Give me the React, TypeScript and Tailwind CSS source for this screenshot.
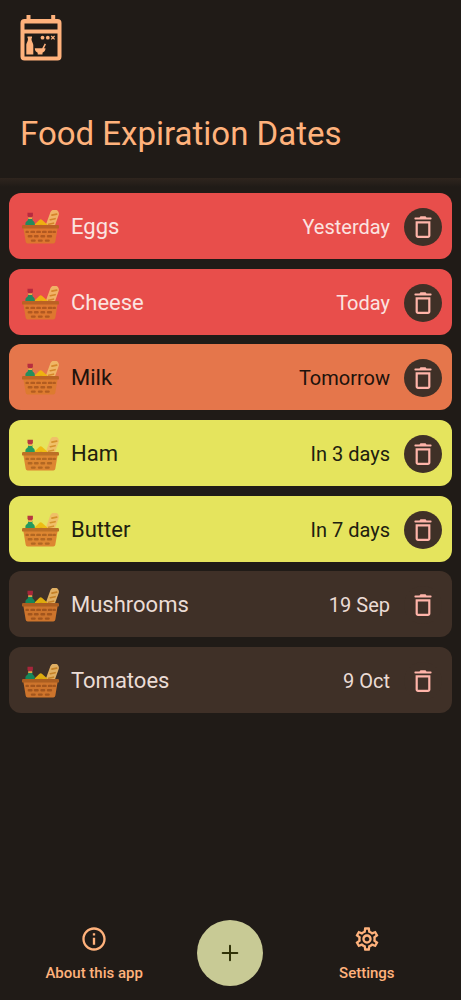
import { MdInfoOutline, MdOutlineSettings } from "react-icons/md";
import clsx from "clsx";

type Tone = "expired" | "soon" | "upcoming" | "later";

type FoodItem = {
  name: string;
  date: string;
  tone: Tone;
};

const items: FoodItem[] = [
  { name: "Eggs", date: "Yesterday", tone: "expired" },
  { name: "Cheese", date: "Today", tone: "expired" },
  { name: "Milk", date: "Tomorrow", tone: "soon" },
  { name: "Ham", date: "In 3 days", tone: "upcoming" },
  { name: "Butter", date: "In 7 days", tone: "upcoming" },
  { name: "Mushrooms", date: "19 Sep", tone: "later" },
  { name: "Tomatoes", date: "9 Oct", tone: "later" },
];

const toneClasses: Record<Tone, string> = {
  expired: "bg-[#e84e4b] text-[#fbe3e0]",
  soon: "bg-[#e5764b] text-[#20120c]",
  upcoming: "bg-[#e5e45d] text-[#20200f]",
  later: "bg-[#3f3027] text-[#ebdcd5]",
};

function AppLogo() {
  return (
    <svg width="42" height="46" viewBox="0 0 42 46" aria-hidden="true">
      <g fill="#ffb27c">
        <path d="M6.500 0h4v6h-4zM31.200 0h4v6h-4z" />
        <path
          fillRule="evenodd"
          d="M4.500 4h33a4 4 0 0 1 4 4v33.500a4 4 0 0 1-4 4h-33a4 4 0 0 1-4-4V8a4 4 0 0 1 4-4zM4.500 8.500v6h33v-6zM4.500 18.500v23h33v-23z"
        />
        <path d="M7.500 21.500h4.500v1.500l-.5.500c0 3.500 1.800 4 1.800 7V39.500H6.300V30.500c0-3 1.700-3.500 1.700-7l-.5-.5z" />
        <path d="M14.800 33.300h7.400l2.500-4.800 1.300.7-2 4.100h1.500c0 2.500-1.500 3.800-3 4.400v1.800h-4.800v-1.800C16.200 37.100 14.800 35.800 14.800 33.300z" />
        <circle cx="22.500" cy="22.700" r="1.900" />
        <circle cx="27.800" cy="22.700" r="1.900" />
      </g>
      <path d="M31.200 21l3.400 3.400M34.600 21l-3.400 3.400" stroke="#ffb27c" strokeWidth="1.200" />
    </svg>
  );
}

function Basket() {
  return (
    <svg className="shrink-0 opacity-90" width="37" height="34" viewBox="0 0 37 34" aria-hidden="true">
      <g transform="rotate(20 31 8)">
        <rect x="26.600" y="-.8" width="8.800" height="21" rx="4.400" fill="#f2bd6a" />
        <path
          d="M29 5.700l4.200-2.600M29 10.500l4.200-2.600M29 15.300l4.200-2.600"
          stroke="#d48a26"
          strokeWidth="1.600"
          strokeLinecap="round"
        />
      </g>
      <path d="M11 16l6.500-6.300q1.200-1 2.400 0L27 16z" fill="#f0b90b" />
      <path d="M15 16q4-3 8 0z" fill="#dba408" />
      <path d="M6 8h4.400v1.500c0 1.800 2.400 1.500 2.400 4.500v3H3.400v-3c0-3 2.600-2.700 2.600-4.500z" fill="#119160" />
      <path d="M6.200 6.500h4V9h-4z" fill="#f0b04c" />
      <path d="M5.500 2.700h5.400v2.600l-.6 1.900H6.100l-.6-1.900z" fill="#b3263e" />
      <path d="M1.200 17h34.600l-2.500 14.700a2 2 0 0 1-2 1.700H5.700a2 2 0 0 1-2-1.700z" fill="#dd7c2d" />
      <rect x="0" y="15" width="37" height="3.600" rx="1.200" fill="#b86420" />
      <path
        d="M4.600 21.900h1.200M9.500 21.900h2.500M15.300 21.900h2.500M21.100 21.900h2.500M27 21.900h2.500M32 21.900h.8M6.800 26.300h2.600M13 26.300h2.600M19.500 26.300h2.600M26 26.300h3M10 30.600h2.600M17 30.600h2.600M24 30.600h2.600"
        stroke="#ad5a1c"
        strokeWidth="2.400"
        strokeLinecap="round"
      />
    </svg>
  );
}

function TrashIcon() {
  return (
    <svg width="28" height="28" viewBox="0 0 28 28" fill="none" aria-hidden="true">
      <path d="M11.500 3.300h5l1 1.300h4.300q.8 0 .8 1t-.8 1H6.200q-.8 0-.8-1t.8-1h4.300z" fill="currentColor" />
      <path
        d="M7.700 9.300h12.600v13.300a1.300 1.300 0 0 1-1.300 1.300H9a1.300 1.300 0 0 1-1.300-1.300z"
        stroke="currentColor"
        strokeWidth="2.200"
      />
    </svg>
  );
}

function FoodRow({ name, date, tone }: FoodItem) {
  return (
    <li className={clsx("flex h-[66px] items-center rounded-xl pt-0.5 pr-[10px] pl-[13px]", toneClasses[tone])}>
      <Basket />
      <span className="ml-3 flex-1 text-[22px] leading-7">{name}</span>
      <span className="text-[20px] leading-7">{date}</span>
      <button
        type="button"
        aria-label={`Delete ${name}`}
        className="ml-[14px] flex size-[38px] items-center justify-center rounded-full bg-[#3f3027] text-[#ffb4a9]"
      >
        <TrashIcon />
      </button>
    </li>
  );
}

export default function App() {
  return (
    <div className="flex min-h-screen flex-col bg-[#201b17] font-[Roboto,sans-serif]">
      <header className="px-5 pt-[15px] pb-6 text-[#ffb27c]">
        <AppLogo />
        <h1 className="mt-[53px] text-[33px] leading-10 font-normal">Food Expiration Dates</h1>
      </header>

      <main className="flex-1">
        <div className="h-[15px] bg-linear-to-b from-[#2f251e] to-[#201b17] to-60%" />
        <ul className="grid min-h-[520px] content-between px-[9px]">
          {items.map((item) => (
            <FoodRow key={item.name} {...item} />
          ))}
        </ul>
      </main>

      <nav className="grid grid-cols-3 justify-items-center px-[26px] pb-[14px] text-[#ffb27c]">
        <a href="#about" className="flex flex-col items-center pt-[5px] text-[15px] leading-5 font-medium">
          <MdInfoOutline className="mb-[10px] size-7" />
          About this app
        </a>
        <button
          type="button"
          aria-label="Add food"
          className="flex size-[66px] items-center justify-center rounded-full bg-[#c8ca95] text-[#303207]"
        >
          <svg width="18" height="18" viewBox="0 0 18 18" aria-hidden="true">
            <path d="M9 1.700v14.600M1.700 9h14.600" stroke="currentColor" strokeWidth="2" strokeLinecap="round" />
          </svg>
        </button>
        <a href="#settings" className="flex flex-col items-center pt-[5px] text-[15px] leading-5 font-medium">
          <MdOutlineSettings className="mb-[10px] size-7" />
          Settings
        </a>
      </nav>
    </div>
  );
}
